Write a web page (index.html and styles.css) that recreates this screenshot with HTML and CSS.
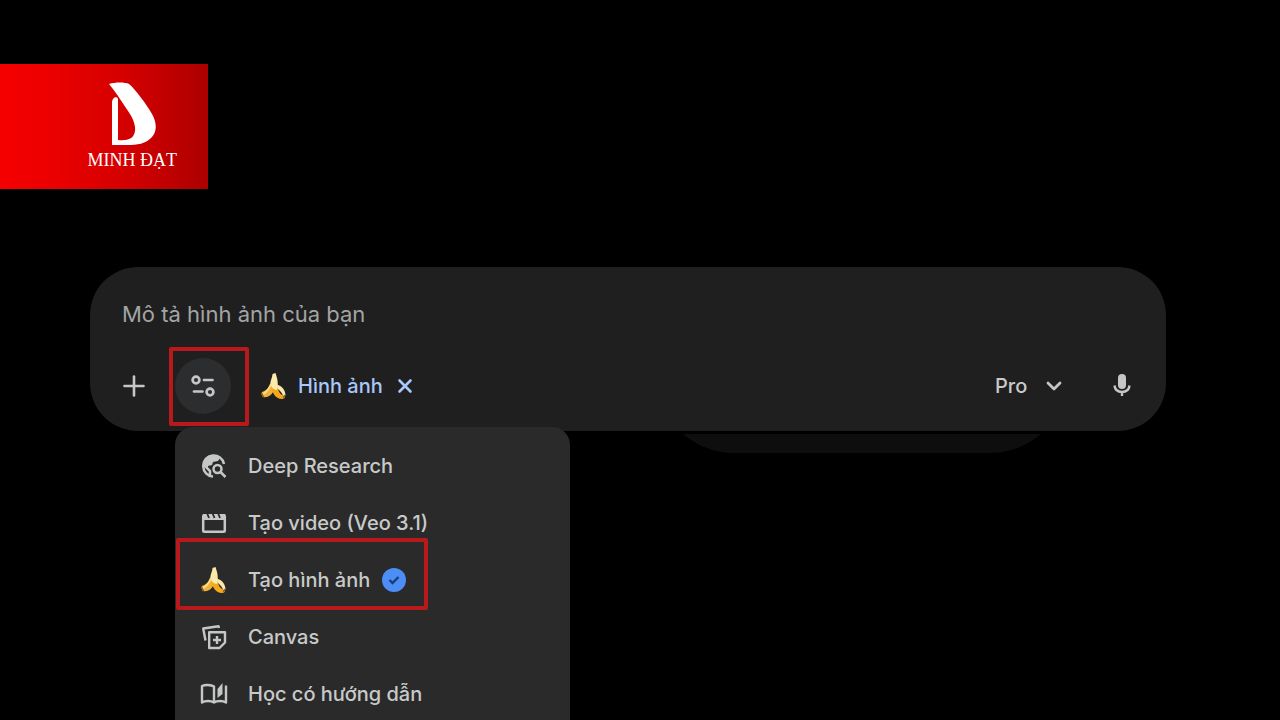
FILE: index.html
```html
<!DOCTYPE html>
<html lang="vi">
<head>
    <meta charset="UTF-8">
    <meta name="viewport" content="width=device-width, initial-scale=1.0">
    <title>Tạo hình ảnh</title>
    <link rel="stylesheet" href="styles.css">
</head>
<body>
    <header class="brand">
        <div class="brand-mark">
            <svg width="48" height="64" viewBox="0 0 48 64" fill="#fff" aria-hidden="true">
                <path d="M1 2C7 0 17 0 21 2C27 7 39 23 44 32C49 41 49 49 44 55C38 62 29 63 19 63H4V21C4 15 9 14 10 17V58C19 59 26 57 27 49C28 41 23 33 18 26C12 17 7 9 1 2Z"/>
            </svg>
            <span class="brand-name">MINH ĐẠT</span>
        </div>
    </header>

    <main class="composer">
        <form class="prompt">
            <input class="prompt-input" type="text" placeholder="Mô tả hình ảnh của bạn" aria-label="Mô tả hình ảnh của bạn">

            <div class="toolbar">
                <button class="icon-btn" type="button" aria-label="Thêm tệp">
                    <svg width="24" height="24" viewBox="0 0 24 24" fill="none" stroke="#c4c7c5" stroke-width="2.6" stroke-linecap="round"><path d="M12 2.5V21.5M2.5 12H21.5"/></svg>
                </button>

                <button class="tools-btn marked" type="button" aria-label="Công cụ">
                    <svg width="24" height="24" viewBox="0 0 24 24" fill="none" stroke="#c4c7c5" stroke-width="2.7" stroke-linecap="round">
                        <circle cx="5" cy="6" r="3.4"/>
                        <path d="M13 6H21.5M3 17.5H11.5"/>
                        <circle cx="19" cy="18" r="3.4"/>
                    </svg>
                </button>

                <div class="chip">
                    <svg width="28" height="28" viewBox="0 0 28 28" aria-hidden="true"><use href="#banana"/></svg>
                    <span>Hình ảnh</span>
                    <button class="icon-btn" type="button" aria-label="Bỏ chọn Hình ảnh">
                        <svg width="24" height="24" viewBox="0 0 24 24" fill="none" stroke="#a8c7fa" stroke-width="2.6" stroke-linecap="round"><path d="M6.5 6.5L17.5 17.5M17.5 6.5L6.5 17.5"/></svg>
                    </button>
                </div>

                <div class="model">
                    <select aria-label="Mô hình">
                        <option>Pro</option>
                    </select>
                    <svg width="24" height="24" viewBox="0 0 24 24" fill="none" stroke="#c4c7c5" stroke-width="2.8" stroke-linecap="round" stroke-linejoin="round" aria-hidden="true"><path d="M6 9L12 15L18 9"/></svg>
                </div>

                <button class="icon-btn" type="button" aria-label="Micrô">
                    <svg width="24" height="24" viewBox="0 0 24 24" fill="none" stroke="#c4c7c5" stroke-width="2.4">
                        <rect x="8" y="0" width="8" height="15" rx="4" fill="#c4c7c5" stroke="none"/>
                        <path d="M4.5 11.5C5 16 8 18 12 18S19 16 19.5 11.5M12 18V22"/>
                    </svg>
                </button>
            </div>
        </form>

        <div class="tray"></div>

        <ul class="menu">
            <li>
                <button type="button">
                    <svg width="28" height="28" viewBox="0 0 28 28" fill="none" stroke="#c4c7c5" stroke-width="2.5">
                        <path d="M13 24.5A10.5 10.5 0 1 1 24 12"/>
                        <path d="M3 12C3 6 8 3 13 3L20 6L18 9L13 10L12 13L8 14L8 17Z" fill="#c4c7c5" stroke="none"/>
                        <path d="M4 13L10 19V23"/>
                        <circle cx="17.5" cy="17" r="4"/>
                        <path d="M20.5 20L25.5 25"/>
                    </svg>
                    Deep Research
                </button>
            </li>
            <li>
                <button type="button">
                    <svg width="28" height="28" viewBox="0 0 28 28" fill="none" stroke="#c4c7c5" stroke-width="2.5" stroke-linejoin="round">
                        <rect x="3.2" y="6.2" width="21.6" height="16.6" rx="1"/>
                        <path d="M3 5H25V11H3Z" fill="#c4c7c5" stroke="none"/>
                        <path d="M7 4L9 9M12.5 4L14.5 9M18 4L20 9" stroke="#2a2a2b" stroke-width="1.8"/>
                    </svg>
                    Tạo video (Veo 3.1)
                </button>
            </li>
            <li class="marked selected">
                <button type="button">
                    <svg width="28" height="28" viewBox="0 0 28 28" aria-hidden="true"><use href="#banana"/></svg>
                    Tạo hình ảnh
                    <svg class="check" width="24" height="24" viewBox="0 0 24 24" fill="none">
                        <circle cx="12" cy="12" r="12" fill="#4c8df6"/>
                        <path d="M7.5 12L10.5 15L16.5 9" stroke="#1b3d75" stroke-width="2.4"/>
                    </svg>
                </button>
            </li>
            <li>
                <button type="button">
                    <svg width="28" height="28" viewBox="0 0 28 28" fill="none" stroke="#c4c7c5" stroke-width="2.4" stroke-linejoin="round">
                        <path d="M5.500 17.500L3.200 5.500L18.500 3.200L19 5"/>
                        <path d="M9.200 9.200H25V19.500L19.500 25H9.200Z"/>
                        <path d="M17 13V21M13 17H21"/>
                    </svg>
                    Canvas
                </button>
            </li>
            <li>
                <button type="button">
                    <svg width="28" height="28" viewBox="0 0 28 28" fill="none" stroke="#c4c7c5" stroke-width="2.4" stroke-linejoin="round">
                        <path d="M14 22.5C11 20.5 5 20.5 2 22.5V6C5 4.5 11 4.5 14 6.5V22.5C17 20.5 23 20.5 26 22.5V5.5"/>
                        <path d="M17.5 9L22.5 3V14L17.5 18Z" fill="#c4c7c5" stroke="none"/>
                    </svg>
                    Học có hướng dẫn
                </button>
            </li>
        </ul>
    </main>

    <!-- shared icon, used by the chip and the menu -->
    <svg class="sprite" width="0" height="0" aria-hidden="true">
        <symbol id="banana" viewBox="0 0 28 28">
            <path d="M11 10C10 15 7 18 2 20C1 21 1.500 24 3 25C8 26 12 23 14 18Z" fill="#f0b23c"/>
            <path d="M15 12C20 13 25 16 25.500 23L23.500 25C22 20 19 17 14 15Z" fill="#fbe7ae"/>
            <path d="M11 14C12 20 15 27 22 27C24 27 25 26 25 24C20 23 18 19 17 13Z" fill="#f5a81c"/>
            <path d="M12.500 2L15.500 1L17 6C18 10 18 14 17 18C13 18 10 14 10.500 10C11 7 12.500 5 12.500 2Z" fill="#fde9a9"/>
            <path d="M11 12C9 17 7 20 3 22" fill="none" stroke="#fddf87" stroke-width="2"/>
            <path d="M1.500 21L3.500 25M23 25.500L25.500 23" stroke="#8a5a22" stroke-width="1.500"/>
        </symbol>
    </svg>
</body>
</html>
```
FILE: styles.css
```css
*,
*::before,
*::after {
    box-sizing: border-box;
}

body {
    margin: 0;
    padding-top: 64px;
    height: 100vh;
    overflow: hidden;
    background: #000;
    color: #c8cac9;
    font-family: Inter, Roboto, sans-serif;
}

button, input, select {
    margin: 0;
    padding: 0;
    border: none;
    background: none;
    color: inherit;
    font-family: inherit;
    outline: none;
}

button {
    cursor: pointer;
}

svg {
    display: block;
    flex: none;
}

.sprite {
    position: absolute;
}

/* Brand banner */
.brand {
    display: flex;
    justify-content: flex-end;
    width: 208px;
    height: 125px;
    padding: 18px 31px 0 0;
    background: linear-gradient(90deg, #f40000 0%, #ee0000 20%, #d40000 60%, #ac0000 100%);
}

.brand-mark {
    display: flex;
    flex-direction: column;
    align-items: center;
    gap: 4px;
}

.brand-name {
    color: #fff;
    font-family: "Liberation Serif", serif;
    font-size: 18px;
    line-height: 20px;
    white-space: nowrap;
}

/* Prompt box */
.composer {
    position: relative;
    z-index: 0;
    margin: 78px 114px 0 90px;
}

.prompt {
    padding: 31px 32px 17px;
    border-radius: 48px;
    background: #1f1f1f;
    box-shadow: 0 3px 0 #000;
}

.prompt-input {
    display: block;
    width: 100%;
    height: 32px;
    font-size: 22px;
}

.prompt-input::placeholder {
    color: #a3a5a5;
    opacity: 1;
}

.toolbar {
    display: flex;
    align-items: center;
    gap: 29px;
    margin-top: 28px;
}

.tools-btn {
    display: grid;
    place-items: center;
    width: 56px;
    height: 56px;
    border-radius: 50%;
    background: #2c2d2e;
}

.chip {
    display: flex;
    align-items: center;
    gap: 10px;
    color: #a8c7fa;
    font-size: 20px;
    font-weight: 500;
}

.model {
    display: flex;
    align-items: center;
    gap: 14px;
    margin-left: auto;
    margin-right: 15px;
}

.model select {
    appearance: none;
    font-size: 20px;
    font-weight: 500;
}

/* Dim panel showing under the prompt box */
.tray {
    position: absolute;
    z-index: -1;
    right: 98px;
    bottom: -22px;
    width: 412px;
    height: 156px;
    border-radius: 78px;
    background: #0e0e0e;
}

/* Tools menu */
.menu {
    position: absolute;
    top: 160px;
    left: 85px;
    width: 395px;
    margin: 0;
    padding: 10px 0 16px;
    border-radius: 18px;
    background: #2a2a2b;
    list-style: none;
}

.menu button {
    display: flex;
    align-items: center;
    gap: 20px;
    width: 100%;
    height: 57px;
    padding: 0 25px;
    font-size: 20px;
    font-weight: 500;
    white-space: nowrap;
}

.menu .check {
    margin-left: -8px;
}

/* Red highlight frames */
.marked {
    position: relative;
}

.marked::after {
    content: "";
    position: absolute;
    top: -11px;
    left: -6px;
    width: 80px;
    height: 79px;
    border: 4px solid #b81a1c;
    border-radius: 2px;
    pointer-events: none;
}

.selected::after {
    top: -13px;
    left: 1px;
    width: 252px;
    height: 72px;
}
```
